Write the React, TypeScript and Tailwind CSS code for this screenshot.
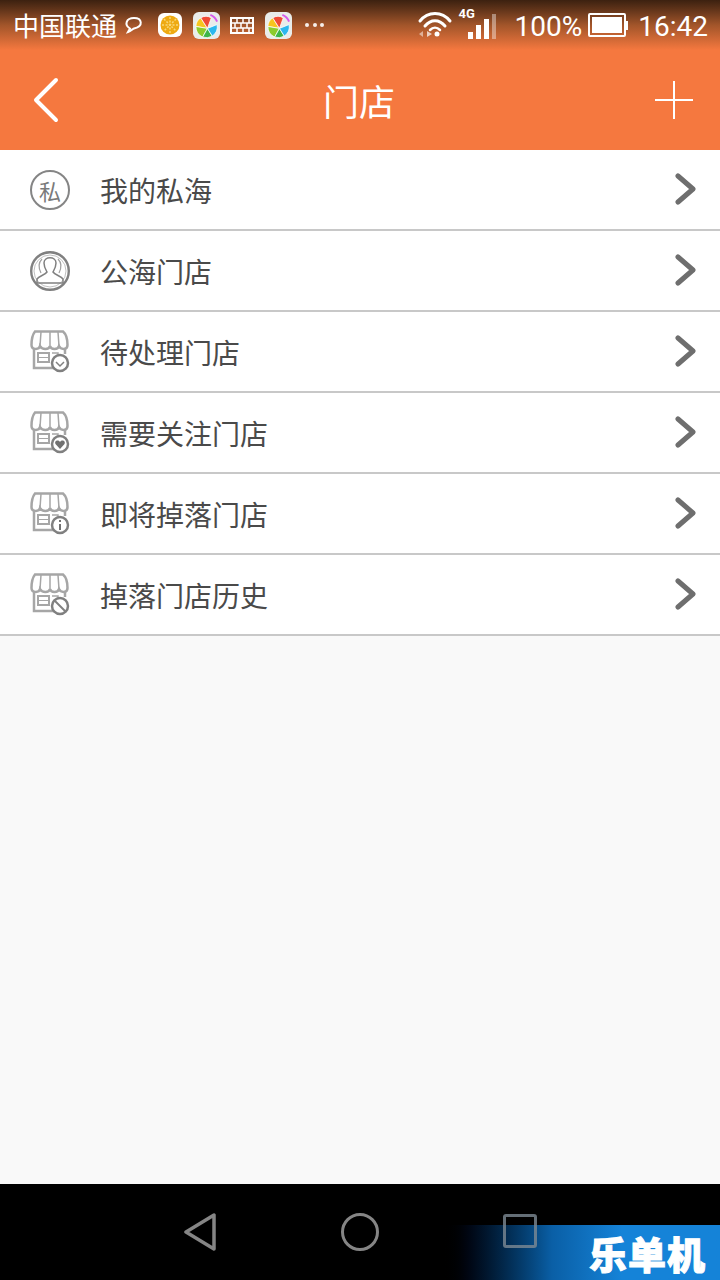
import React from 'react';

const cjk = { fontFamily: '"Noto Sans CJK SC", sans-serif' };
const roboto = { fontFamily: 'Roboto, sans-serif' };

const Ball: React.FC = () => (
    <svg width="27" height="27" viewBox="0 0 28 28">
        <rect width="28" height="28" rx="6" fill="#e9ecea" />
        <g stroke="#ffffff" strokeWidth="0.800">
            <path d="M15 17 L3 15 A11 11 0 0 1 8 6 Z" fill="#f7c51e" />
            <path d="M15 17 L8 6 A11 11 0 0 1 19 6 Z" fill="#ef4b35" />
            <path d="M15 17 L3 15 A12 12 0 0 0 10 26 Z" fill="#8ccb2c" />
            <path d="M15 17 L10 26 A12 12 0 0 0 20 25 Z" fill="#3cb54a" />
            <path d="M15 17 L20 25 A12 12 0 0 0 25 13 Z" fill="#2bb8ee" />
        </g>
        <path d="M18 3 Q23 5 25 10" fill="none" stroke="#d65bea" strokeWidth="2" />
    </svg>
);

const StatusBar: React.FC = () => (
    <div className="h-[50px] flex items-center pl-[13px] pr-[12px] text-white bg-gradient-to-b from-[#3c2110] via-[#a2552a] to-[#f5783f]">
        <span className="text-[26px] leading-none" style={cjk}>中国联通</span>
        <svg className="ml-[7px]" width="20" height="20" viewBox="0 0 20 20" fill="none" stroke="white" strokeWidth="2">
            <path d="M4 17 L6 13.500 C0 10 2 3 10 3 C18 3 20 11 10 13.500 C8.500 14 7 16 4 17 Z" />
        </svg>
        <div className="ml-[14px] w-[24px] h-[24px] rounded-[6px] bg-white flex items-center justify-center">
            <svg width="20" height="20" viewBox="0 0 20 20">
                <circle cx="10" cy="10" r="9.500" fill="#eeaa12" />
                <path d="M10 2 V18 M2 10 H18 M4 4 L16 16 M16 4 L4 16" stroke="#f8d878" strokeWidth="1.500" strokeDasharray="2 1.500" />
            </svg>
        </div>
        <div className="ml-[11px]"><Ball /></div>
        <svg className="ml-[10px]" width="24" height="17" viewBox="0 0 24 17" fill="none" stroke="white" strokeWidth="2">
            <rect x="1" y="1" width="22" height="15" />
            <path d="M1 6 H23 M1 11 H23 M7 1 V6 M13 1 V6 M19 1 V6 M5 6 V11 M11 6 V11 M17 6 V11 M7 11 V16 M13 11 V16 M19 11 V16" strokeWidth="1.500" />
        </svg>
        <div className="ml-[11px]"><Ball /></div>
        <div className="ml-[13px] flex gap-[3.500px]">
            <div className="w-[4px] h-[4px] rounded-full bg-white/90" />
            <div className="w-[4px] h-[4px] rounded-full bg-white/90" />
            <div className="w-[4px] h-[4px] rounded-full bg-white/90" />
        </div>
        <svg className="ml-auto mt-[-2px]" width="36" height="26" viewBox="0 0 36 26" fill="none" stroke="white" strokeLinecap="round">
            <path d="M3 10 C11 0 25 0 33 10" strokeWidth="3" />
            <path d="M8 15 C14 8 22 8 28 15" strokeWidth="3" />
            <path d="M13 19 C16 16 20 16 23 19" strokeWidth="2.500" />
            <circle cx="20" cy="23" r="2.500" fill="white" stroke="none" />
            <path d="M2 23 L6 20 V26 Z" fill="white" fillOpacity="0.5" stroke="none" />
            <path d="M15 23 L10 20 V26 Z" fill="white" fillOpacity="0.7" stroke="none" />
        </svg>
        <div className="relative ml-[6px] w-[38px] h-[28px] flex items-end gap-[3px]">
            <span className="absolute left-0 top-[-4px] text-[13px] leading-none font-bold" style={roboto}>4G</span>
            <div className="ml-[9px] w-[5px] h-[7px] bg-white" />
            <div className="w-[5px] h-[14px] bg-white" />
            <div className="w-[5px] h-[20px] bg-white" />
            <div className="w-[4px] h-[25px] bg-white/40" />
        </div>
        <span className="ml-[18px] mt-[3px] text-[28px] leading-none" style={roboto}>100%</span>
        <div className="ml-[6px] flex items-center">
            <div className="w-[38px] h-[24px] border-2 border-white rounded-[2px] p-[2px]">
                <div className="w-full h-full bg-white" />
            </div>
            <div className="w-[2px] h-[9px] bg-white" />
        </div>
        <span className="ml-[10px] mt-[3px] text-[28px] leading-none" style={roboto}>16:42</span>
    </div>
);

const Header: React.FC = () => (
    <div className="h-[100px] bg-[#f5783f] flex items-center justify-between pl-[33px] pr-[27px] text-white">
        <svg width="28" height="46" viewBox="0 0 28 46" fill="none" stroke="white" strokeWidth="4" strokeLinecap="round" strokeLinejoin="round">
            <path d="M23 3 L3 23 L23 43" />
        </svg>
        <h1 className="text-[36px] leading-none font-normal ml-[2px]" style={cjk}>门店</h1>
        <svg width="38" height="38" viewBox="0 0 38 38" stroke="white" strokeWidth="2">
            <path d="M19 0 V38 M0 19 H38" />
        </svg>
    </div>
);

const Store: React.FC<{ children: React.ReactNode }> = ({ children }) => (
    <svg width="40" height="44" viewBox="0 0 40 44" fill="none" stroke="#a6a6a6" strokeWidth="2.500">
        <path d="M5 1.500 H33 C36 4 37.500 10 37.500 15 C37.500 20 31 20 29 16 C28 20 21 20 20 16 C19 20 12 20 10 16 C9 20 1.500 20 1.500 15 C1.500 10 3 4 5 1.500 Z" />
        <path d="M11 2 L10 16 M20 2 V16 M28 2 L29 16" strokeWidth="1.500" />
        <path d="M4 19 V38 H24 M35 19 V24" />
        <rect x="8" y="23" width="11" height="9" strokeWidth="2" />
        <path d="M8 27.500 H19" strokeWidth="1" />
        <path d="M22 23 H28 V27" strokeWidth="1.500" />
        <circle cx="30" cy="33" r="8" fill="white" stroke="#808080" />
        {children}
    </svg>
);

const PrivateIcon: React.FC = () => (
    <div className="w-[40px] h-[40px] rounded-full border-[2.500px] border-[#858585] flex items-center justify-center text-[#7a7a7a] text-[22px] leading-none" style={cjk}>私</div>
);

const PublicIcon: React.FC = () => (
    <svg width="40" height="40" viewBox="0 0 40 40" fill="none" stroke="#808080">
        <circle cx="20" cy="20" r="18.800" strokeWidth="2.400" />
        <circle cx="20" cy="20" r="16" strokeWidth="1" stroke="#c0c0c0" />
        <path d="M14 12 C14 5 26 5 26 12 C26 16 24 19 23 21 C25 24 31 25 33 28 L33 32 H7 L7 28 C9 25 15 24 17 21 C16 19 14 16 14 12 Z" strokeWidth="1.500" />
        <path d="M12 8 C8 12 9 18 11 22 M28 8 C32 12 31 18 29 22" strokeWidth="1.200" stroke="#a0a0a0" />
    </svg>
);

const items: { label: string; icon: React.ReactNode }[] = [
    { label: '我的私海', icon: <PrivateIcon /> },
    { label: '公海门店', icon: <PublicIcon /> },
    { label: '待处理门店', icon: <Store><path d="M26 32 L30 36 L34 32" stroke="#808080" strokeWidth="1.500" /></Store> },
    { label: '需要关注门店', icon: <Store><path d="M30 38 L25.500 33 C24 30 28 28 30 31 C32 28 36 30 34.500 33 Z" fill="#707070" stroke="none" /></Store> },
    { label: '即将掉落门店', icon: <Store><path d="M30 32 V38 M30 28 V30" stroke="#707070" strokeWidth="2" /></Store> },
    { label: '掉落门店历史', icon: <Store><path d="M24.500 27.500 L35.500 38.500" stroke="#808080" strokeWidth="2" /></Store> },
];

const Row: React.FC<{ label: string; icon: React.ReactNode }> = ({ label, icon }) => (
    <div className="h-[81px] bg-white border-b-2 border-[#c8c8c8] flex items-center pl-[30px] pr-[23px]">
        <div className="w-[70px] h-[44px] flex items-center">{icon}</div>
        <span className="text-[28px] leading-none text-[#4a4a4a]" style={cjk}>{label}</span>
        <svg className="ml-auto mt-[-2px]" width="22" height="32" viewBox="0 0 22 32" fill="none" stroke="#6e6e6e" strokeWidth="5" strokeLinecap="round" strokeLinejoin="round">
            <path d="M3 3 L18 16 L3 29" />
        </svg>
    </div>
);

const NavBar: React.FC = () => (
    <div className="relative h-[96px] bg-black overflow-hidden">
        <div className="absolute left-[440px] right-0 top-[41px] bottom-0 bg-gradient-to-r from-black via-[#0a5fa6] via-40% to-[#1583d8] to-65%" />
        <div className="relative h-full flex items-center pl-[184px]">
            <svg width="32" height="38" viewBox="0 0 32 38" fill="none" stroke="#858585" strokeWidth="3.500" strokeLinejoin="round">
                <path d="M2 19 L30 2 V36 Z" />
            </svg>
            <div className="ml-[125px] w-[38px] h-[38px] rounded-full border-[3.500px] border-[#858585]" />
            <div className="ml-[124px] mt-[-2px] w-[34px] h-[34px] rounded-[3px] border-[3.500px] border-[#7d8a94]/80" />
        </div>
        <span className="absolute right-[14px] top-[47px] text-[38px] leading-[44px] font-black text-white tracking-[1px] [-webkit-text-stroke:1px_white]" style={cjk}>乐单机</span>
    </div>
);

export default function App() {
    return (
        <div className="w-[720px] h-[1280px] flex flex-col bg-[#f9f9f9] overflow-hidden">
            <StatusBar />
            <Header />
            <div className="flex-1">
                {items.map(item => (
                    <Row key={item.label} label={item.label} icon={item.icon} />
                ))}
            </div>
            <NavBar />
        </div>
    );
}
